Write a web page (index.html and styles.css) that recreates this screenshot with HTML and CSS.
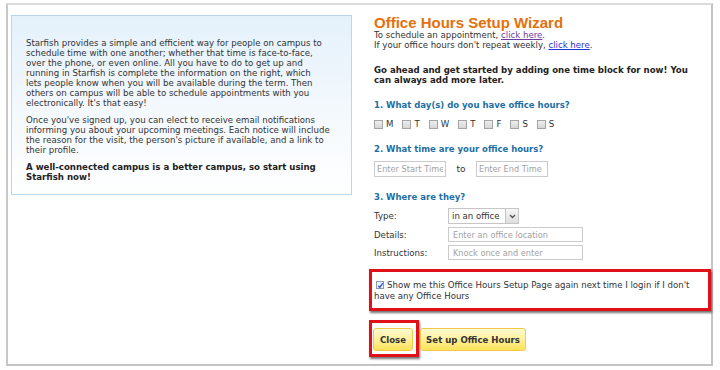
FILE: index.html
```html
<!DOCTYPE html>
<html>
<head>
  <title>Office Hours Setup Wizard</title>
  <link rel="stylesheet" href="styles.css">
</head>
<body>
  <div class="frame">
    <div class="intro">
      <p>Starfish provides a simple and efficient way for people on campus to schedule time with one another; whether that time is face-to-face, over the phone, or even online. All you have to do to get up and running in Starfish is complete the information on the right, which<br>lets people know when you will be available during the term. Then others on campus will be able to schedule appointments with you electronically. It's that easy!</p>
      <p>Once you've signed up, you can elect to receive email notifications informing you about your upcoming meetings. Each notice will include the reason for the visit, the person's picture if available, and a link to their profile.</p>
      <p class="strong">A well-connected campus is a better campus, so start using Starfish now!</p>
    </div>

    <div class="wizard">
      <h1>Office Hours Setup Wizard</h1>
      <div class="links">
        To schedule an appointment, <a href="#" class="visited">click here</a>.<br>
        If your office hours don't repeat weekly, <a href="#">click here</a>.
      </div>

      <p class="lead">Go ahead and get started by adding one time block for now! You can always add more later.</p>

      <h2>1. What day(s) do you have office hours?</h2>
      <div class="days">
        <label><span class="box"></span>M</label>
        <label><span class="box"></span>T</label>
        <label><span class="box"></span>W</label>
        <label><span class="box"></span>T</label>
        <label><span class="box"></span>F</label>
        <label><span class="box"></span>S</label>
        <label><span class="box"></span>S</label>
      </div>

      <h2>2. What time are your office hours?</h2>
      <div class="times">
        <input type="text" placeholder="Enter Start Time">
        <span class="to">to</span>
        <input type="text" placeholder="Enter End Time">
      </div>

      <h2>3. Where are they?</h2>
      <div class="where">
        <label>Type:</label>
        <div class="select">
          <span>in an office</span>
          <span class="arrow">
            <svg width="7" height="5" viewBox="0 0 7 5"><path d="M1 1 L3.5 3.5 L6 1" fill="none" stroke="#555" stroke-width="1.4"/></svg>
          </span>
        </div>
        <label>Details:</label>
        <input type="text" class="wide" placeholder="Enter an office location">
        <label>Instructions:</label>
        <input type="text" class="wide" placeholder="Knock once and enter">
      </div>

      <div class="again marked">
        <span class="box checked">
          <svg width="7" height="7" viewBox="0 0 7 7"><path d="M1.3 3.8 L2.8 5.4 L5.8 1.2" fill="none" stroke="#2a55b8" stroke-width="1.3"/></svg>
        </span>Show me this Office Hours Setup Page again next time I login if I don't have any Office Hours
      </div>

      <div class="actions">
        <div class="marked close-mark">
          <button>Close</button>
        </div>
        <button class="setup">Set up Office Hours</button>
      </div>
    </div>
  </div>
</body>
</html>
```

FILE: styles.css
```css
body {
  margin: 0;
  background-color: #fff;
  font-family: "DejaVu Sans", Verdana, sans-serif;
  font-size: 8.6px;
  color: #333;
}

.frame {
  display: flex;
  align-items: flex-start;
  box-sizing: border-box;
  width: 707px;
  height: 363px;
  margin: 3px 0 0 6px;
  padding: 10px 0 0 3px;
  border: 2px solid #cfcfcf;
  border-color: #dcdcdc #c4c4c4 #c4c4c4 #c8c8c8;
}

.intro {
  box-sizing: border-box;
  width: 341px;
  height: 180px;
  padding: 22px 20px 0 14px;
  border: 1px solid #b9d8ef;
  background: linear-gradient(#e4f1fb, #f4f9fd 55%, #fff);
  line-height: 10px;
}

.intro p {
  margin: 0 0 7px 0;
}

.intro .strong {
  font-weight: bold;
  color: #222;
}

.wizard {
  flex: 1;
  margin-left: 17px;
  line-height: 10px;
}

.wizard h1 {
  margin: 0 0 0 5px;
  font-family: "Liberation Sans", Arial, sans-serif;
  font-size: 15px;
  line-height: 15px;
  color: #e5700c;
}

.links {
  margin-left: 5px;
}

.links a {
  color: #1f33d6;
}

.links a.visited {
  color: #6d3da3;
}

.lead {
  max-width: 318px;
  margin: 15px 0 0 5px;
  font-weight: bold;
  color: #222;
}

.wizard h2 {
  margin: 15px 0 0 5px;
  font-size: 8.5px;
  line-height: 10px;
  color: #1d6fa5;
}

.days {
  display: flex;
  gap: 9px;
  margin: 9px 0 0 5px;
}

.days label {
  display: flex;
  align-items: center;
  gap: 3px;
}

.box {
  display: inline-block;
  box-sizing: border-box;
  width: 9px;
  height: 9px;
  border: 1px solid #a4a4a4;
  background: linear-gradient(#eee, #d6d6d6);
}

.times {
  display: flex;
  align-items: center;
  margin: 7px 0 0 5px;
}

input {
  box-sizing: border-box;
  height: 16px;
  margin: 0;
  padding: 0 4px;
  border: 1px solid #cbcbcb;
  font-family: inherit;
  font-size: 8.2px;
  color: #333;
}

input::placeholder {
  color: #a2a2a2;
}

.times input {
  width: 72px;
  padding: 0 2px;
}

.times .to {
  width: 30px;
  text-align: center;
  font-size: 9px;
}

.where {
  display: grid;
  grid-template-columns: 74px auto;
  row-gap: 3px;
  align-items: center;
  justify-items: start;
  margin: 6px 0 0 5px;
}

.where input.wide {
  width: 135px;
  height: 15px;
}

.select {
  display: flex;
  box-sizing: border-box;
  width: 71px;
  height: 16px;
  border: 1px solid #c6c6c6;
  font-size: 8.6px;
}

.select span:first-child {
  flex: 1;
  padding: 2px 3px 0 3px;
}

.select .arrow {
  display: flex;
  align-items: center;
  justify-content: center;
  width: 12px;
  border-left: 1px solid #c6c6c6;
  background: linear-gradient(#f6f6f6, #dedede);
}

.marked {
  border: 3px solid #e01018;
  box-shadow: 1px 2px 2px rgba(0, 0, 0, 0.55);
}

.again {
  box-sizing: border-box;
  height: 42px;
  margin-top: 9px;
  padding: 8px 2px 0 2px;
  line-height: 11px;
  font-size: 8.6px;
}

.again .box {
  position: relative;
  top: 1px;
  width: 8px;
  height: 8px;
  margin: 0 3px 0 2px;
  background: #eef2fa;
  border-color: #8d9ab4;
}

.again .box svg {
  display: block;
}

.actions {
  display: flex;
  align-items: flex-start;
  margin-top: 9px;
}

.close-mark {
  padding: 5px 3px 3px 1px;
}

button {
  box-sizing: border-box;
  height: 23px;
  padding: 0 4px;
  border: 1px solid #f2c84a;
  border-radius: 3px;
  background: linear-gradient(#fffbd2, #fff09a 50%, #ffe35a);
  font-family: inherit;
  font-size: 8.6px;
  font-weight: bold;
  color: #333;
}

.close-mark button {
  width: 40px;
}

.setup {
  width: 106px;
  margin: 8px 0 0 1px;
}
```
